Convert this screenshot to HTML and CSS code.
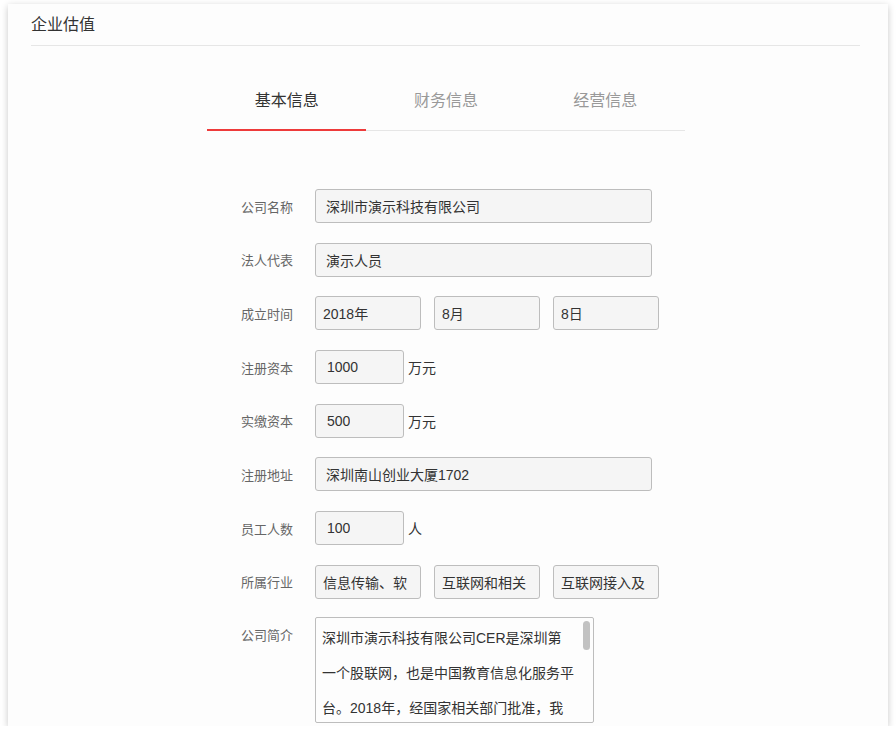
FILE: index.html
```html
<!DOCTYPE html>
<html lang="zh-CN">
<head>
<meta charset="utf-8">
<title>企业估值</title>
<link rel="stylesheet" href="styles.css">
</head>
<body>
<div class="card">
  <div class="header">企业估值</div>
  <div class="tabs">
    <div class="tab active">基本信息</div>
    <div class="tab">财务信息</div>
    <div class="tab">经营信息</div>
  </div>
  <div class="form">
    <div class="row">
      <div class="label">公司名称</div>
      <div class="box w-full"><span class="val">深圳市演示科技有限公司</span></div>
    </div>
    <div class="row">
      <div class="label">法人代表</div>
      <div class="box w-full"><span class="val">演示人员</span></div>
    </div>
    <div class="row">
      <div class="label">成立时间</div>
      <div class="group">
        <div class="box w-third pad-s"><span class="val">2018年</span></div>
        <div class="box w-third pad-s"><span class="val">8月</span></div>
        <div class="box w-third pad-s"><span class="val">8日</span></div>
      </div>
    </div>
    <div class="row">
      <div class="label">注册资本</div>
      <div class="box w-small"><span class="val">1000</span></div>
      <div class="unit">万元</div>
    </div>
    <div class="row">
      <div class="label">实缴资本</div>
      <div class="box w-small"><span class="val">500</span></div>
      <div class="unit">万元</div>
    </div>
    <div class="row">
      <div class="label">注册地址</div>
      <div class="box w-full"><span class="val">深圳南山创业大厦1702</span></div>
    </div>
    <div class="row">
      <div class="label">员工人数</div>
      <div class="box w-small"><span class="val">100</span></div>
      <div class="unit">人</div>
    </div>
    <div class="row row-last">
      <div class="label">所属行业</div>
      <div class="group">
        <div class="box w-third pad-s"><span class="val">信息传输、软</span></div>
        <div class="box w-third pad-s"><span class="val">互联网和相关</span></div>
        <div class="box w-third pad-s"><span class="val">互联网接入及</span></div>
      </div>
    </div>
    <div class="row row-top">
      <div class="label label-top">公司简介</div>
      <div class="textarea">
        <div class="ta-text">深圳市演示科技有限公司CER是深圳第<br>一个股联网，也是中国教育信息化服务平台。2018年，经国家相关部门批准，我</div>
        <div class="thumb"></div>
      </div>
    </div>
  </div>
</div>
</body>
</html>
```

FILE: styles.css
```css
html, body {
  margin: 0;
  padding: 0;
  background: #ffffff;
}

body {
  font-family: "Liberation Sans", "Noto Sans CJK SC", sans-serif;
  color: #333333;
  padding: 4px 8px 0 8px;
}

.card {
  width: 880px;
  height: 722px;
  background: #fdfdfd;
  box-shadow: 0 2px 7px rgba(0, 0, 0, 0.22);
  overflow: hidden;
  box-sizing: border-box;
}

.header {
  margin: 0 28px 0 23px;
  height: 41px;
  line-height: 41px;
  font-size: 16px;
  color: #333333;
  border-bottom: 1px solid #e6e6e6;
}

.tabs {
  display: flex;
  width: 478px;
  margin: 30px 0 0 199px;
  box-shadow: inset 0 -1px 0 #e6e6e6;
}

.tab {
  flex: 1;
  text-align: center;
  font-size: 16px;
  line-height: 48px;
  padding-top: 1px;
  padding-bottom: 4px;
  color: #999999;
  border-bottom: 2px solid transparent;
}

.tab.active {
  color: #333333;
  border-bottom-color: #ee3b3b;
}

.form {
  margin-top: 58px;
  padding-left: 192px;
}

.row {
  display: flex;
  align-items: center;
  height: 34px;
  margin-bottom: 19.7px;
}

.row-last {
  margin-bottom: 18px;
}

.row-top {
  align-items: flex-start;
  height: auto;
  margin-bottom: 0;
}

.label {
  width: 93px;
  text-align: right;
  font-size: 13px;
  color: #666666;
  margin-right: 22px;
}

.label-top {
  line-height: 38px;
}

.group {
  display: flex;
  gap: 13px;
}

.box {
  box-sizing: border-box;
  height: 34px;
  border: 1px solid #bdbdbd;
  border-radius: 3px;
  background: #f5f5f5;
  padding: 0 10px 0 11px;
  display: flex;
  align-items: center;
  font-size: 14px;
  color: #333333;
}

.val {
  display: block;
  overflow: hidden;
  white-space: nowrap;
}

.w-full {
  width: 337px;
  padding-left: 10px;
}

.w-third {
  width: 106px;
}

.pad-s {
  padding: 0 7px;
}

.w-small {
  width: 89px;
}

.unit {
  margin-left: 4px;
  font-size: 14px;
  color: #333333;
}

.textarea {
  position: relative;
  box-sizing: border-box;
  width: 279px;
  height: 106px;
  border: 1px solid #bdbdbd;
  border-radius: 2px;
  background: #fdfdfd;
  overflow: hidden;
  padding: 3px 16px 0 6px;
}

.ta-text {
  font-size: 14px;
  line-height: 35px;
  color: #333333;
}

.thumb {
  position: absolute;
  right: 3px;
  top: 3px;
  width: 7px;
  height: 29px;
  border-radius: 4px;
  background: #c2c2c2;
}
```
